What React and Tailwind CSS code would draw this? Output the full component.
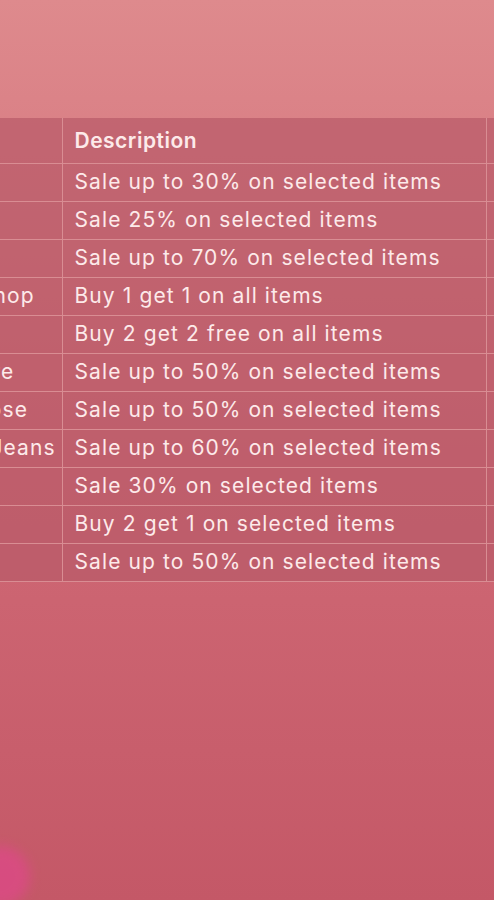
import React from "react";

const rows = [
  ["Zara", "Sale up to 30% on selected items"],
  ["H&M", "Sale 25% on selected items"],
  ["Mango", "Sale up to 70% on selected items"],
  ["The Body Shop", "Buy 1 get 1 on all items"],
  ["Nike", "Buy 2 get 2 free on all items"],
  ["Reebok Store", "Sale up to 50% on selected items"],
  ["Lucy and Rose", "Sale up to 50% on selected items"],
  ["Tom Baker Jeans", "Sale up to 60% on selected items"],
  ["Uniqlo", "Sale 30% on selected items"],
  ["Bershka", "Buy 2 get 1 on selected items"],
  ["Gap", "Sale up to 50% on selected items"],
];

export default function App() {
  return (
    <div
      className="relative w-[494px] h-[900px] overflow-hidden bg-gradient-to-b from-[#de8a8d] via-[#d06a76] to-[#c45867] text-[#fdeaea]"
      style={{ fontFamily: '"Inter", "Open Sans", sans-serif' }}
    >
      <div className="pt-[118px]">
        <div className="-ml-[138px] w-[840px]">
          <table className="w-[840px] table-fixed border-collapse bg-[#b85a68]/70">
            <colgroup>
              <col className="w-[200px]" />
              <col className="w-[424px]" />
              <col className="w-[216px]" />
            </colgroup>
            <thead>
              <tr className="h-[45px]">
                <th className="border-r border-b border-[#d98d93] pl-[6px] text-left font-semibold text-[21px]"></th>
                <th className="border-x border-b border-[#d98d93] pl-3 text-left font-semibold text-[21px] tracking-[0.5px]">
                  Description
                </th>
                <th className="border-l border-b border-[#d98d93]"></th>
              </tr>
            </thead>
            <tbody>
              {rows.map(([name, desc], i) => (
                <tr key={i} className="h-[38px]">
                  <td className="border-r border-b border-[#d98d93] pl-[6px] text-left text-[21px] tracking-[1.1px] whitespace-nowrap overflow-hidden">
                    {name}
                  </td>
                  <td className="border-x border-b border-[#d98d93] pl-3 text-left text-[21px] tracking-[1.1px] whitespace-nowrap">
                    {desc}
                  </td>
                  <td className="border-l border-b border-[#d98d93]"></td>
                </tr>
              ))}
            </tbody>
          </table>
        </div>
      </div>
      <div className="absolute -left-[30px] top-[846px] h-[60px] w-[60px] rounded-full bg-[#dc4a86] blur-[6px] opacity-80"></div>
    </div>
  );
}
